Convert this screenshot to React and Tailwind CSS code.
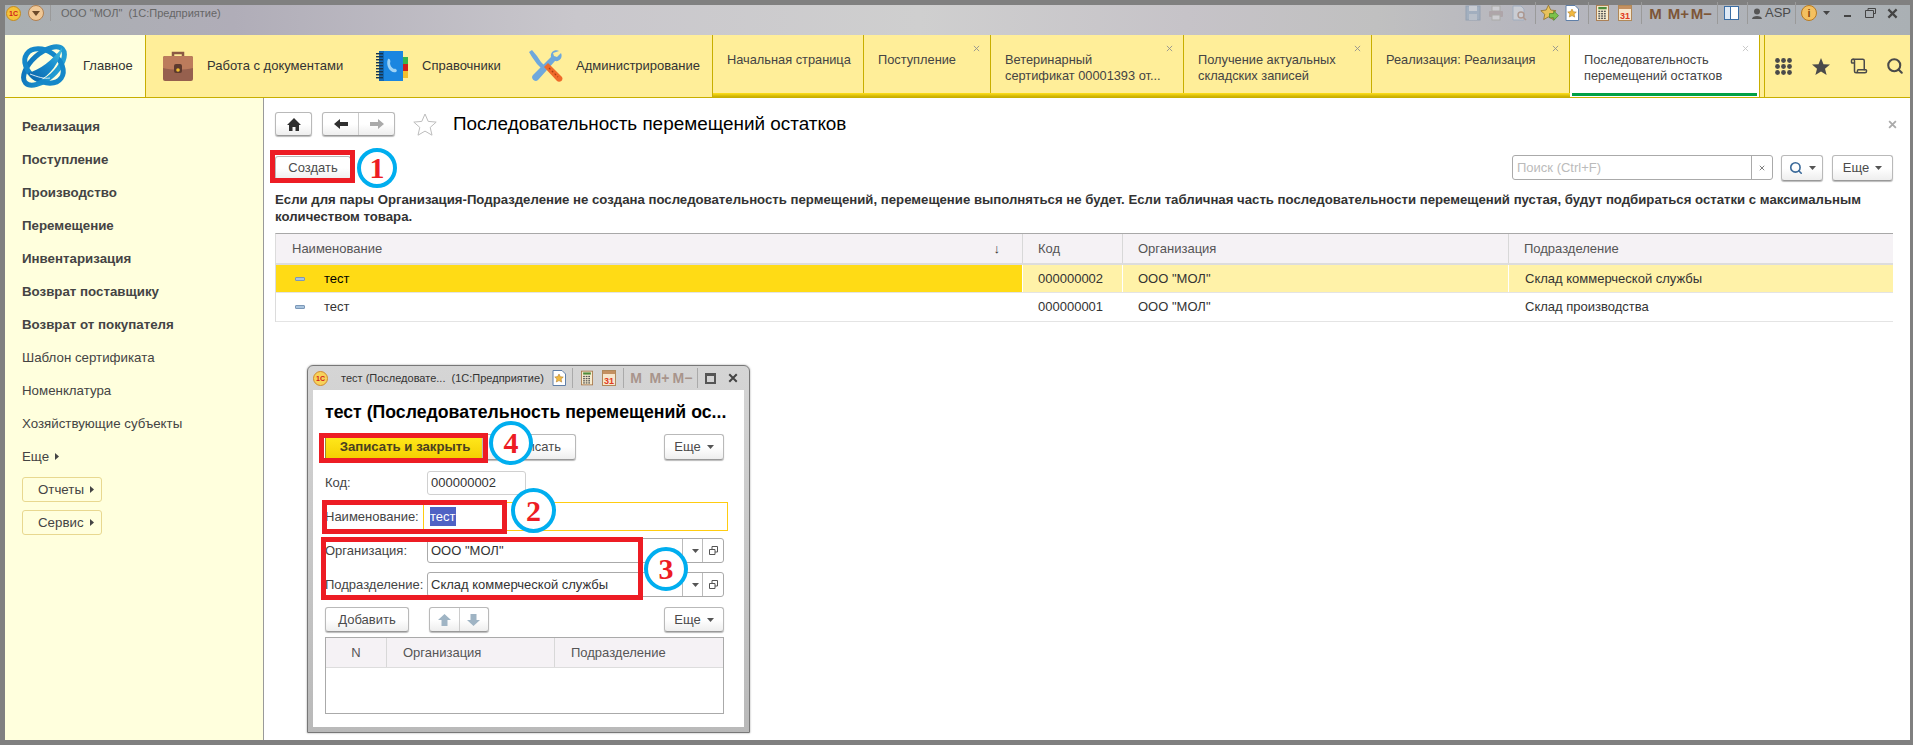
import React from "react";
import { Search, Scroll } from "lucide-react";

const FONT = "font-['Liberation_Sans',Arial,sans-serif]";
const BTN = "flex items-center justify-center rounded-[3px] border border-[#b9b9b9] border-b-[#999] bg-gradient-to-b from-white via-white to-[#eeeeee] shadow-[0_1px_1px_#bbb] text-[13px] text-[#4b4b4b]";

function Logo() {
  return (
    <svg width="48" height="44" viewBox="0 0 48 44">
      <defs>
        <linearGradient id="lg1" x1="0" y1="0" x2="1" y2="1">
          <stop offset="0" stopColor="#0b6fb8" />
          <stop offset="1" stopColor="#27a7d8" />
        </linearGradient>
        <linearGradient id="lg2" x1="0" y1="1" x2="1" y2="0">
          <stop offset="0" stopColor="#0a62a8" />
          <stop offset=".6" stopColor="#1a8fd0" />
          <stop offset="1" stopColor="#45c0dc" />
        </linearGradient>
      </defs>
      <ellipse cx="24" cy="22" rx="25" ry="12.500" transform="rotate(-42 24 22)" fill="none" stroke="url(#lg1)" strokeWidth="5" />
      <ellipse cx="24" cy="22" rx="21" ry="15" transform="rotate(35 24 22)" fill="none" stroke="#1487c9" strokeWidth="5" />
      <path d="M8 29C20 26 32 16 42 4c-2 14-12 28-24 33-4 0-8-3-10-8z" fill="url(#lg2)" />
      <path d="M10 30c8 3 14 5 20 4" stroke="#fff" strokeWidth="1" fill="none" opacity=".8" />
    </svg>
  );
}

function Briefcase() {
  return (
    <svg width="32" height="31" viewBox="0 0 32 31">
      <path d="M11 5V2h10v3" fill="none" stroke="#8b5a44" strokeWidth="2.500" />
      <rect x="1" y="5" width="30" height="25" rx="2" fill="#96604e" />
      <path d="M1 7a2 2 0 0 1 2-2h26a2 2 0 0 1 2 2v10c-8 2-22 2-30 0z" fill="#bc7c5c" />
      <rect x="12" y="13" width="8" height="9" rx="2" fill="#5d3a2e" />
      <circle cx="16" cy="19" r="1.800" fill="#f3c02f" />
    </svg>
  );
}

function Notebook() {
  return (
    <svg width="34" height="32" viewBox="0 0 34 32">
      <rect x="4" y="1" width="24" height="30" fill="#1b86e0" />
      <rect x="4" y="1" width="5" height="30" fill="#1268b4" />
      {[3, 6, 9, 12, 15, 18, 21, 24, 27].map((y) => (
        <rect key={y} x="1" y={y} width="7" height="1.400" fill="#17354f" />
      ))}
      <rect x="28" y="7" width="5" height="7" fill="#39b54a" />
      <rect x="28" y="14" width="5" height="7" fill="#d01c1c" />
      <rect x="28" y="21" width="5" height="7" fill="#f3c02f" />
      <path d="M13 9c2-1 3 3 2 4 0 3 2 5 4 6 2-1 4 2 2 3-5 2-11-6-8-13z" fill="#9fd3f5" />
    </svg>
  );
}

function Tools() {
  return (
    <svg width="34" height="34" viewBox="0 0 34 34">
      <path d="M3 1l5 6 4 6 3 3-3 3-4-4-5-7-3-5z" fill="#6fa8dc" />
      <path d="M30 2c-4-2-9 1-8 6L4 26c-3 3 2 8 5 5l17-19c5 1 8-4 6-8l-4 4-3-1-1-3z" fill="#6fa8dc" />
      <path d="M15 18l4-4 14 14c2 4-3 6-5 4z" fill="#ef6a2a" />
      <path d="M20 19l9 9" stroke="#a83c10" strokeWidth="1.200" strokeDasharray="2 2" />
    </svg>
  );
}

function Cross({ size = 7, color = "#8f8f8f", width = 1 }) {
  return (
    <svg width={size} height={size} viewBox="0 0 8 8">
      <path d="M1 1l6 6M7 1L1 7" stroke={color} strokeWidth={width} />
    </svg>
  );
}

function Caret({ color = "#555" }) {
  return (
    <svg width="7" height="4" viewBox="0 0 7 4" className="ml-[6px]">
      <path d="M0 0h7L3.500 4z" fill={color} />
    </svg>
  );
}

function CaretRight() {
  return (
    <svg width="4" height="7" viewBox="0 0 4 7" className="ml-[6px]">
      <path d="M0 0v7l4-3.500z" fill="#444" />
    </svg>
  );
}

function Sep() {
  return <div className="ml-[4px] mr-[2px] h-[22px] w-px bg-[#9a9a9a]" />;
}

function Slot({ children, w = "w-[23px]" }) {
  return <div className={`flex ${w} items-center justify-center`}>{children}</div>;
}

function FavIcon() {
  return (
    <svg width="14" height="16" viewBox="0 0 14 16">
      <path d="M1 .5h9l3.500 3.500v11.500H1z" fill="#fff" stroke="#5f7fa8" />
      <path d="M7 4l1.300 2.700 3 .4-2.200 2 .6 3L7 10.600 4.300 12l.6-3-2.200-2 3-.4z" fill="#f0b840" stroke="#a8701c" strokeWidth=".5" />
    </svg>
  );
}

function CalcIcon() {
  return (
    <svg width="13" height="16" viewBox="0 0 14 17">
      <rect x=".5" y=".5" width="13" height="16" fill="#f7eccf" stroke="#a8784a" />
      <rect x="2.500" y="2" width="9" height="2.500" fill="#4d8a3a" />
      {[6, 8.500, 11, 13.500].map((y) =>
        [2.500, 5.500, 8.500].map((x) => <rect key={`${x}-${y}`} x={x} y={y} width="2" height="1.500" fill="#555" />)
      )}
    </svg>
  );
}

function CalIcon() {
  return (
    <svg width="14" height="16" viewBox="0 0 14 16">
      <rect x=".5" y=".5" width="13" height="15" fill="#f7e6cc" stroke="#b08858" />
      <rect x="1" y="1" width="12" height="3" fill="#c49060" />
      <text x="7" y="14" textAnchor="middle" fontSize="9" fontWeight="700" fill="#e03a20" fontFamily="Liberation Sans">31</text>
    </svg>
  );
}

function SaveIcon() {
  return (
    <svg width="16" height="16" viewBox="0 0 16 16" opacity=".4">
      <rect x="1" y="1" width="14" height="14" fill="#7f9fc0" stroke="#5f7f9f" />
      <rect x="4" y="1" width="8" height="5" fill="#dde6ef" />
      <rect x="4" y="9" width="8" height="6" fill="#b7c8d8" />
    </svg>
  );
}

function PrintIcon() {
  return (
    <svg width="16" height="16" viewBox="0 0 16 16" opacity=".4">
      <rect x="4" y="1" width="8" height="5" fill="#eee" stroke="#998" />
      <rect x="1" y="6" width="14" height="6" rx="1" fill="#a08a8a" />
      <rect x="4" y="10" width="8" height="5" fill="#eee" stroke="#998" />
    </svg>
  );
}

function PreviewIcon() {
  return (
    <svg width="16" height="16" viewBox="0 0 16 16" opacity=".4">
      <path d="M2 1h8l3 3v11H2z" fill="#e8eef4" stroke="#7f9fc0" />
      <circle cx="10" cy="10" r="3" fill="none" stroke="#a06a4a" strokeWidth="1.400" />
      <path d="M12 12l3 3" stroke="#a06a4a" strokeWidth="1.500" />
    </svg>
  );
}

function StarArrow() {
  return (
    <svg width="19" height="18" viewBox="0 0 18 17">
      <path d="M8 1l2.200 4.700 5 .6-3.700 3.400 1 5L8 12.200 3.500 14.700l1-5L.8 6.300l5-.6z" fill="#e8c25a" stroke="#8a6a20" strokeWidth=".7" />
      <path d="M9 9h4V6.500L17.500 11 13 15.500V13H9z" fill="#7cc24a" stroke="#3f7a20" strokeWidth=".6" />
    </svg>
  );
}

function MLabel({ children, dim }) {
  return (
    <span className={`font-bold leading-none ${dim ? "text-[14px] text-[#a8948c]" : "text-[15px] text-[#7d5638]"}`}>{children}</span>
  );
}

function TitleBar() {
  return (
    <div className="flex h-[30px] shrink-0 items-center bg-[linear-gradient(90deg,#a9afb1_0%,#b0adb8_12%,#c9c7cc_30%,#cfcfcf_48%,#c6c3c8_62%,#c0c0c0_72%,#b6b6be_80%,#aab0b4_100%)] pb-[14px] pl-[1px] pr-[2px]">
      <svg width="15" height="15" viewBox="0 0 15 15">
        <circle cx="7.500" cy="7.500" r="7" fill="#f5c23a" stroke="#c48a20" />
        <text x="7.500" y="10" textAnchor="middle" fontSize="7" fontWeight="700" fill="#d0201a" fontFamily="Liberation Sans">1С</text>
      </svg>
      <div className="ml-[7px] flex h-[16px] w-[16px] items-center justify-center rounded-full border border-[#b08050] bg-[#f0c896]">
        <svg width="8" height="5" viewBox="0 0 8 5"><path d="M0 0h8L4 5z" fill="#6b4a2a" /></svg>
      </div>
      <div className="ml-[6px] mr-[10px] h-[16px] w-px bg-[#9a9a9a]" />
      <span className="whitespace-pre text-[11px] text-[#666]">ООО "МОЛ"  (1С:Предприятие)</span>
      <div className="ml-auto flex items-center">
        <Slot><SaveIcon /></Slot>
        <Slot><PrintIcon /></Slot>
        <Slot><PreviewIcon /></Slot>
        <Sep />
        <Slot><StarArrow /></Slot>
        <Slot><FavIcon /></Slot>
        <Sep />
        <Slot><CalcIcon /></Slot>
        <Slot><CalIcon /></Slot>
        <Sep />
        <Slot><MLabel>M</MLabel></Slot>
        <Slot><MLabel>M+</MLabel></Slot>
        <Slot><MLabel>M−</MLabel></Slot>
        <Sep />
        <Slot>
          <div className="flex h-[14px] w-[15px] border border-[#3b6ea5] bg-white"><div className="w-1/2 border-r border-[#3b6ea5] bg-[#dfe9f5]" /></div>
        </Slot>
        <Sep />
        <svg width="10" height="11" viewBox="0 0 10 11" className="ml-[2px]">
          <circle cx="5" cy="3.500" r="3" fill="#555" />
          <path d="M0 11c0-4 10-4 10 0z" fill="#555" />
        </svg>
        <span className="ml-[3px] text-[13px] text-[#4a4a4a]">ASP</span>
        <div className="ml-[4px] mr-[2px] h-[22px] w-px bg-[#9a9a9a]" />
        <div className="ml-[3px] flex h-[16px] w-[16px] items-center justify-center rounded-full border border-[#b87a20] bg-[#f4c060] text-[11px] font-bold leading-none text-[#8a4a10]">i</div>
        <Caret color="#444" />
        <Slot w="w-[34px]"><div className="mt-[5px] h-[2px] w-[7px] bg-[#444]" /></Slot>
        <Slot w="w-[12px]">
          <svg width="11" height="10" viewBox="0 0 11 10"><path d="M3 2V.5h7.500v5H8.500M.5 2.500h8v7h-8z" fill="none" stroke="#444" /></svg>
        </Slot>
        <Slot w="w-[32px]"><Cross size={11} color="#444" width={1.600} /></Slot>
      </div>
    </div>
  );
}

function NavSection({ icon, label, wText }) {
  return (
    <div className="flex items-center">
      {icon}
      <span className={`ml-[13px] ${wText} whitespace-nowrap text-[13px] text-[#333]`}>{label}</span>
    </div>
  );
}

function Tab({ w, lines, close = true, active }) {
  return (
    <div className={`relative flex h-full ${w} shrink-0 flex-col border-r border-[#c8ae00] pl-[14px] pt-[17px] text-[12.800px] leading-[16px] text-[#444] ${active ? "bg-white" : "bg-[#ffee99]"}`}>
      {lines.map((l) => (
        <div key={l} className="whitespace-nowrap">{l}</div>
      ))}
      {close && <div className="absolute right-[10px] top-[10px]"><Cross color={active ? "#c4c4c4" : "#8f8f8f"} /></div>}
      {active ? (
        <div className="absolute bottom-[1px] left-[2px] right-[2px] h-[3px] bg-[#009f45]" />
      ) : (
        <div className="absolute bottom-0 left-0 right-[-1px] h-[4px] bg-gradient-to-b from-[#ffdf1a] to-[#c8ae00]" />
      )}
    </div>
  );
}

function NavBar() {
  return (
    <div className="flex h-[63px] shrink-0 border-b border-[#c8ae00] bg-[#ffee99]">
      <div className="flex w-[141px] shrink-0 items-center border-r border-[#c8ae00] bg-[#ffffdd] pl-[15px]">
        <Logo />
        <span className="ml-[15px] text-[13px] text-[#333]">Главное</span>
      </div>
      <div className="flex w-[567px] shrink-0 items-center border-r border-[#c8ae00] pl-[16px]">
        <NavSection icon={<Briefcase />} label="Работа с документами" wText="w-[168px]" />
        <NavSection icon={<Notebook />} label="Справочники" wText="w-[107px]" />
        <NavSection icon={<Tools />} label="Администрирование" />
      </div>
      <Tab w="w-[151px]" lines={["Начальная страница"]} close={false} />
      <Tab w="w-[127px]" lines={["Поступление"]} />
      <Tab w="w-[193px]" lines={["Ветеринарный", "сертификат 00001393 от..."]} />
      <Tab w="w-[188px]" lines={["Получение актуальных", "складских записей"]} />
      <Tab w="w-[198px]" lines={["Реализация: Реализация"]} />
      <Tab w="w-[190px]" lines={["Последовательность", "перемещений остатков"]} active />
      <div className="ml-[4px] flex flex-1 items-center border-l border-[#c8ae00] pl-[10px] text-[#4a4a4a]">
        <svg width="17" height="17" viewBox="0 0 17 17" fill="#4a4a4a">
          {[2.500, 8.500, 14.500].map((y) =>
            [2.500, 8.500, 14.500].map((x) => <circle key={`${x}-${y}`} cx={x} cy={y} r="2.400" />)
          )}
        </svg>
        <svg width="18" height="17" viewBox="0 0 18 17" fill="#4a4a4a" className="ml-[20px]">
          <path d="M9 0l2.500 6.200 6.500.4-5 4.200 1.600 6.200L9 13.500 3.400 17 5 10.800 0 6.600l6.500-.4z" />
        </svg>
        <Scroll size={18} strokeWidth={2} className="ml-[20px]" />
        <Search size={18} strokeWidth={2.800} className="ml-[18px]" />
      </div>
    </div>
  );
}

const SIDE_BOLD = ["Реализация", "Поступление", "Производство", "Перемещение", "Инвентаризация", "Возврат поставщику", "Возврат от покупателя"];
const SIDE_PLAIN = ["Шаблон сертификата", "Номенклатура", "Хозяйствующие субъекты"];

function Sidebar() {
  return (
    <div className="flex w-[259px] shrink-0 flex-col border-r border-[#9a9a9a] bg-[#ffffdd] pl-[17px] pt-[12px] text-[13.300px] text-[#444]">
      {SIDE_BOLD.map((s) => (
        <div key={s} className="flex h-[33px] items-center font-bold">{s}</div>
      ))}
      {SIDE_PLAIN.map((s) => (
        <div key={s} className="flex h-[33px] items-center">{s}</div>
      ))}
      <div className="flex h-[33px] items-center">Еще<CaretRight /></div>
      {["Отчеты", "Сервис"].map((s, i) => (
        <div key={s} className={`flex h-[25px] w-[80px] items-center rounded-[3px] border border-[#e8d890] pl-[15px] ${i ? "mt-[8px]" : "mt-[4px]"}`}>
          {s}<CaretRight />
        </div>
      ))}
    </div>
  );
}

function Row({ active }) {
  const cell = `flex h-full items-center border-l border-white ${active ? "bg-[#fff2a8]" : "bg-white"}`;
  return (
    <div className={`grid ${active ? "h-[28px]" : "h-[29px]"} grid-cols-[746px_100px_386px_1fr] items-center border-b border-[#e4e4e4] text-[13px] text-[#333]`}>
      <div className={`flex h-full items-center pl-[19px] ${active ? "bg-[#ffdb15] text-black" : ""}`}>
        <div className="h-[4px] w-[10px] rounded-[1px] border border-[#7c98b8] bg-[#a9c4de]" />
        <span className="ml-[19px]">тест</span>
      </div>
      <div className={`${cell} pl-[15px]`}>{active ? "000000002" : "000000001"}</div>
      <div className={`${cell} pl-[15px]`}>ООО "МОЛ"</div>
      <div className={`${cell} pl-[16px]`}>{active ? "Склад коммерческой службы" : "Склад производства"}</div>
    </div>
  );
}

function MainTable() {
  const head = "flex h-full items-center border-l border-[#d8d8d8] pl-[15px]";
  return (
    <div className="mt-[8px] border-l border-t border-[#a8a8a8] border-l-[#dcdcdc]">
      <div className="grid h-[31px] grid-cols-[746px_100px_386px_1fr] border-b-2 border-[#dddddd] bg-[#f5f2f5] text-[13px] text-[#555]">
        <div className="flex h-full items-center justify-between pl-[16px] pr-[22px]">Наименование<span className="text-[13px] text-[#333]">↓</span></div>
        <div className={head}>Код</div>
        <div className={head}>Организация</div>
        <div className={head}>Подразделение</div>
      </div>
      <Row active />
      <Row />
    </div>
  );
}

function ArrowBtn({ dir, color }) {
  return (
    <svg width="14" height="12" viewBox="0 0 14 12" fill={color}>
      <path d={dir === "left" ? "M0 6l6-5v3h8v4H6v3z" : "M14 6L8 1v3H0v4h8v3z"} />
    </svg>
  );
}

function Field({ label, children }) {
  return (
    <div className="flex items-center">
      <span className="w-[102px] shrink-0 whitespace-nowrap text-[13px] text-[#444]">{label}</span>
      {children}
    </div>
  );
}

function RefInput({ value }) {
  return (
    <div className="flex h-[25px] flex-1 items-center rounded-[3px] border border-[#aaa] text-[13px] text-[#333]">
      <span className="flex-1 whitespace-nowrap pl-[3px]">{value}</span>
      <div className="flex h-full w-[20px] items-center justify-center border-l border-[#bbb]"><Caret /></div>
      <div className="flex h-full w-[21px] items-center justify-center border-l border-[#bbb]">
        <svg width="9" height="9" viewBox="0 0 9 9"><path d="M3 3V.5h5.500V6H6M.5 3.500H6v5H.5z" fill="none" stroke="#555" /></svg>
      </div>
    </div>
  );
}

function Dialog() {
  return (
    <div className="absolute left-[43px] top-[267px] w-[443px] rounded-t-[6px] border border-[#777] bg-[linear-gradient(180deg,#d5d5d5,#b9b9b9)] px-[5px] pb-[5px] shadow-[0_0_2px_#999]">
      <div className="flex h-[24px] items-center">
        <div className="flex h-[15px] w-[15px] items-center justify-center rounded-full border border-[#d08a30] bg-[#f7d25a] text-[7px] font-bold leading-none text-[#d0201a]">1С</div>
        <span className="ml-[13px] w-[199px] whitespace-pre text-[11px] text-[#333]">тест (Последовате...  (1С:Предприятие)</span>
        <div className="ml-[12px] flex items-center">
          <Slot w="w-[14px]"><FavIcon /></Slot>
          <div className="ml-[6px] h-[20px] w-px bg-[#aaa]" />
          <div className="ml-[8px]"><Slot w="w-[12px]"><CalcIcon /></Slot></div>
          <div className="ml-[9px]"><Slot w="w-[14px]"><CalIcon /></Slot></div>
          <div className="ml-[7px] h-[20px] w-px bg-[#aaa]" />
          <div className="ml-[7px]"><Slot w="w-[10px]"><MLabel dim>M</MLabel></Slot></div>
          <div className="ml-[11px]"><Slot w="w-[15px]"><MLabel dim>M+</MLabel></Slot></div>
          <div className="ml-[8px]"><Slot w="w-[15px]"><MLabel dim>M−</MLabel></Slot></div>
          <div className="ml-[7px] h-[20px] w-px bg-[#aaa]" />
          <div className="ml-[7px] h-[11px] w-[11px] border-2 border-t-[3px] border-[#555]" />
          <div className="ml-[12px]"><Cross size={10} color="#444" width={1.600} /></div>
        </div>
      </div>
      <div className="flex h-[337px] flex-col bg-white pl-[12px] pr-[20px] pt-[9px]">
        <div className="whitespace-nowrap text-[17.700px] font-bold leading-[26px] text-black">тест (Последовательность перемещений ос...</div>
        <div className="mt-[9px] flex h-[26px] items-center">
          <div className="flex h-[21px] w-[159px] items-center justify-center border-l border-[#9a8a30] bg-gradient-to-b from-[#ffe81a] to-[#f5d000] text-[13.200px] font-bold text-[#4a4020]">Записать и закрыть</div>
          <div className={`${BTN} -ml-[2px] h-[26px] w-[94px] justify-end pr-[14px]`}>Записать</div>
          <div className={`${BTN} ml-auto h-[26px] w-[60px]`}>Еще<Caret /></div>
        </div>
        <div className="mt-[11px] flex flex-col">
          <Field label="Код:">
            <div className="flex h-[24px] w-[99px] items-center rounded-[3px] border border-[#d0d0d0] pl-[3px] text-[13px] text-[#333]">000000002</div>
          </Field>
          <Field label="Наименование:">
            <div className="-ml-[4px] -mr-[4px] mb-[7px] mt-[7px] flex h-[29px] w-[305px] items-center border border-[#ffcc11] pl-[6px] text-[13px]">
              <span className="bg-[#4f62c4] text-white">тест</span>
            </div>
          </Field>
          <Field label="Организация:"><RefInput value={'ООО "МОЛ"'} /></Field>
          <div className="h-[9px]" />
          <Field label="Подразделение:"><RefInput value="Склад коммерческой службы" /></Field>
        </div>
        <div className="mt-[10px] flex items-center">
          <div className={`${BTN} h-[25px] w-[84px]`}>Добавить</div>
          <div className={`${BTN} ml-[20px] h-[25px] w-[60px]`}>
            <div className="flex h-full flex-1 items-center justify-center border-r border-[#ccc]">
              <svg width="13" height="12" viewBox="0 0 13 12" fill="#9fb4c4"><path d="M6.500 0L13 6H9.500v6h-6V6H0z" /></svg>
            </div>
            <div className="flex h-full flex-1 items-center justify-center">
              <svg width="13" height="12" viewBox="0 0 13 12" fill="#9fb4c4"><path d="M6.500 12L13 6H9.500V0h-6v6H0z" /></svg>
            </div>
          </div>
          <div className={`${BTN} ml-auto h-[25px] w-[60px]`}>Еще<Caret /></div>
        </div>
        <div className="mt-[5px] h-[77px] border border-[#aaa]">
          <div className="grid h-[30px] grid-cols-[60px_168px_1fr] border-b border-[#ddd] bg-[#f5f2f5] text-[13px] text-[#555]">
            <div className="flex items-center justify-center">N</div>
            <div className="flex items-center border-l border-[#d8d8d8] pl-[16px]">Организация</div>
            <div className="flex items-center border-l border-[#d8d8d8] pl-[16px]">Подразделение</div>
          </div>
        </div>
      </div>
    </div>
  );
}

function Step({ n, className }) {
  return (
    <div className={`absolute flex items-center justify-center rounded-full border-[4px] border-[#00aeef] bg-white font-['Liberation_Serif',serif] text-[30px] font-bold leading-none text-[#ed1c24] ${className}`}>
      {n}
    </div>
  );
}

function Mark({ className }) {
  return <div className={`absolute border-[5px] border-[#ed1c24] ${className}`} />;
}

function Content() {
  return (
    <div className="relative flex-1 bg-white pl-[11px] pr-[17px] pt-[14px]">
      <div className="flex h-[24px] items-center">
        <div className={`${BTN} h-[24px] w-[37px]`}>
          <svg width="14" height="13" viewBox="0 0 14 13" fill="#2f2f2f"><path d="M7 0L0 7h2v6h3.500V9h3v4H12V7h2z" /></svg>
        </div>
        <div className={`${BTN} ml-[10px] h-[24px] w-[73px]`}>
          <div className="flex h-full flex-1 items-center justify-center border-r border-[#ccc]"><ArrowBtn dir="left" color="#2f2f2f" /></div>
          <div className="flex h-full flex-1 items-center justify-center"><ArrowBtn dir="right" color="#aaa" /></div>
        </div>
        <svg width="24" height="23" viewBox="0 0 24 23" className="ml-[18px]">
          <path d="M12 1l3.200 7.400 8 .7-6 5.300 1.800 7.800L12 18.100l-7 4.100 1.800-7.800-6-5.300 8-.7z" fill="none" stroke="#bdbdbd" />
        </svg>
        <span className="ml-[16px] text-[18.900px] text-black">Последовательность перемещений остатков</span>
        <div className="-mr-[4px] ml-auto"><Cross size={9} color="#aaa" width={1.600} /></div>
      </div>
      <div className="mt-[19px] flex h-[25px] items-center">
        <div className={`${BTN} h-[24px] w-[76px]`}>Создать</div>
        <div className="ml-auto flex h-[25px] w-[261px] items-center rounded-[3px] border border-[#aaa] pl-[4px] text-[13px] text-[#bbb]">
          <span className="flex-1">Поиск (Ctrl+F)</span>
          <div className="flex h-full w-[21px] items-center justify-center border-l border-[#aaa]"><Cross size={6} color="#555" /></div>
        </div>
        <div className={`${BTN} ml-[8px] h-[26px] w-[42px]`}>
          <Search size={14} strokeWidth={2.800} className="text-[#3b6a9a]" /><Caret />
        </div>
        <div className={`${BTN} ml-[9px] h-[26px] w-[61px]`}>Еще<Caret /></div>
      </div>
      <p className="mt-[11px] text-[13.200px] font-bold leading-[17px] text-[#333]">
        Если для пары Организация-Подразделение не создана последовательность пермещений, перемещение выполняться не будет. Если табличная часть последовательности перемещений пустая, будут подбираться остатки с максимальным количеством товара.
      </p>
      <MainTable />
      <Dialog />
      <Mark className="left-[6px] top-[52px] h-[33px] w-[85px]" />
      <Step n="1" className="left-[93px] top-[50px] h-[40px] w-[40px]" />
      <Mark className="left-[55px] top-[335px] h-[30px] w-[169px]" />
      <Step n="4" className="left-[225px] top-[323px] h-[44px] w-[44px]" />
      <Mark className="left-[58px] top-[402px] h-[34px] w-[185px]" />
      <Step n="2" className="left-[247px] top-[390px] h-[45px] w-[45px]" />
      <Mark className="left-[57px] top-[439px] h-[63px] w-[322px]" />
      <Step n="3" className="left-[380px] top-[449px] h-[44px] w-[44px]" />
    </div>
  );
}

export default function App() {
  return (
    <div className={`flex h-[745px] w-[1913px] flex-col overflow-hidden bg-[#808080] pb-[5px] pl-[5px] pr-[3px] pt-[5px] ${FONT}`}>
      <TitleBar />
      <NavBar />
      <div className="flex min-h-0 flex-1">
        <Sidebar />
        <Content />
      </div>
    </div>
  );
}
